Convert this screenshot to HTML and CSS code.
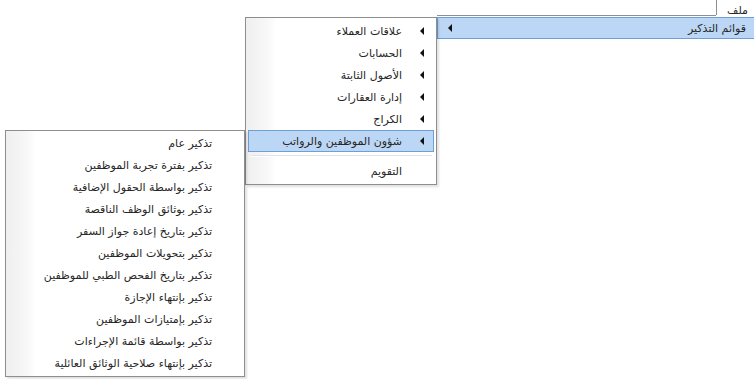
FILE: index.html
```html
<!DOCTYPE html>
<html lang="ar">
<head>
<meta charset="utf-8">
<link rel="stylesheet" href="styles.css">
</head>
<body>
<div class="menubar">
  <div class="mb-item">ملف</div>
</div>

<div class="popup main">
  <div class="item hl">
    <span class="label">قوائم التذكير</span>
    <span class="spacer"></span>
    <span class="arrow"></span>
  </div>
</div>

<div class="popup m1">
  <div class="item"><span class="arrow"></span><span class="label">علاقات العملاء</span></div>
  <div class="item"><span class="arrow"></span><span class="label">الحسابات</span></div>
  <div class="item"><span class="arrow"></span><span class="label">الأصول الثابتة</span></div>
  <div class="item"><span class="arrow"></span><span class="label">إدارة العقارات</span></div>
  <div class="item"><span class="arrow"></span><span class="label">الكراج</span></div>
  <div class="item hl"><span class="arrow"></span><span class="label">شؤون الموظفين والرواتب</span></div>
  <div class="sep"></div>
  <div class="item"><span class="arrow none"></span><span class="label">التقويم</span></div>
</div>

<div class="popup m2">
  <div class="item"><span class="label">تذكير عام</span></div>
  <div class="item"><span class="label">تذكير بفترة تجربة الموظفين</span></div>
  <div class="item"><span class="label">تذكير بواسطة الحقول الإضافية</span></div>
  <div class="item"><span class="label">تذكير بوثائق الوظف الناقصة</span></div>
  <div class="item"><span class="label">تذكير بتاريخ إعادة جواز السفر</span></div>
  <div class="item"><span class="label">تذكير بتحويلات الموظفين</span></div>
  <div class="item"><span class="label">تذكير بتاريخ الفحص الطبي للموظفين</span></div>
  <div class="item"><span class="label">تذكير بإنتهاء الإجازة</span></div>
  <div class="item"><span class="label">تذكير بإمتيازات الموظفين</span></div>
  <div class="item"><span class="label">تذكير بواسطة قائمة الإجراءات</span></div>
  <div class="item"><span class="label">تذكير بإنتهاء صلاحية الوثائق العائلية</span></div>
</div>
</body>
</html>
```

FILE: styles.css
```css
html, body {
  margin: 0;
  padding: 0;
  background: #ffffff;
}
body {
  position: relative;
  width: 754px;
  height: 379px;
  overflow: hidden;
  font-family: "DejaVu Sans", "Noto Sans", sans-serif;
  font-size: 11px;
  color: #262626;
}
.menubar {
  position: relative;
  z-index: 5;
  direction: rtl;
  display: flex;
  height: 16px;
}
.mb-item {
  width: 38px;
  height: 15px;
  box-sizing: border-box;
  border-left: 1px solid #8d8d8d;
  padding-right: 6px;
  padding-top: 4px;
  line-height: 14px;
}
.popup {
  position: absolute;
  box-sizing: border-box;
  background: linear-gradient(to right, #efefef 0, #f7f7f7 20px, #fcfcfc 27px, #ffffff 30px);
  border: 1px solid #8e8e8e;
  padding: 2px;
  box-shadow: 2px 2px 2px rgba(0,0,0,0.12);
}
.popup.main {
  left: 437px;
  top: 15px;
  right: -4px;
  height: 26px;
  border: none;
  background: transparent;
  box-shadow: none;
  padding: 2px 0 0 0;
  width: auto;
}
.popup.main::before {
  content: "";
  position: absolute;
  left: 0;
  right: 42px;
  top: 0;
  height: 1px;
  background: #8e8e8e;
}
.popup.m1 {
  left: 245px;
  top: 17px;
  width: 192px;
}
.popup.m2 {
  left: 5px;
  top: 130px;
  width: 240px;
  padding-top: 1px;
}
.item {
  direction: rtl;
  display: flex;
  align-items: center;
  height: 22px;
  box-sizing: border-box;
  border: 1px solid transparent;
  white-space: nowrap;
}
.item.hl {
  background: #bcd7f5;
  border-color: #6f9fd5;
}
.m1 .item {
  padding-right: 9px;
}
.m2 .item {
  padding-right: 29px;
}
.main .item {
  padding-right: 11px;
  padding-left: 10px;
}
.main .spacer {
  flex: 1;
}
.arrow {
  display: inline-block;
  width: 0;
  height: 0;
  border-top: 4px solid transparent;
  border-bottom: 4px solid transparent;
  border-right: 4px solid #111;
}
.m1 .arrow {
  margin-left: 18px;
}
.arrow.none {
  visibility: hidden;
}
.sep {
  height: 8px;
  margin: 0 2px 0 3px;
  background: linear-gradient(to bottom, transparent 3px, #e2e3e3 3px, #e2e3e3 4px, #ffffff 4px, #ffffff 5px, transparent 5px);
}
```
